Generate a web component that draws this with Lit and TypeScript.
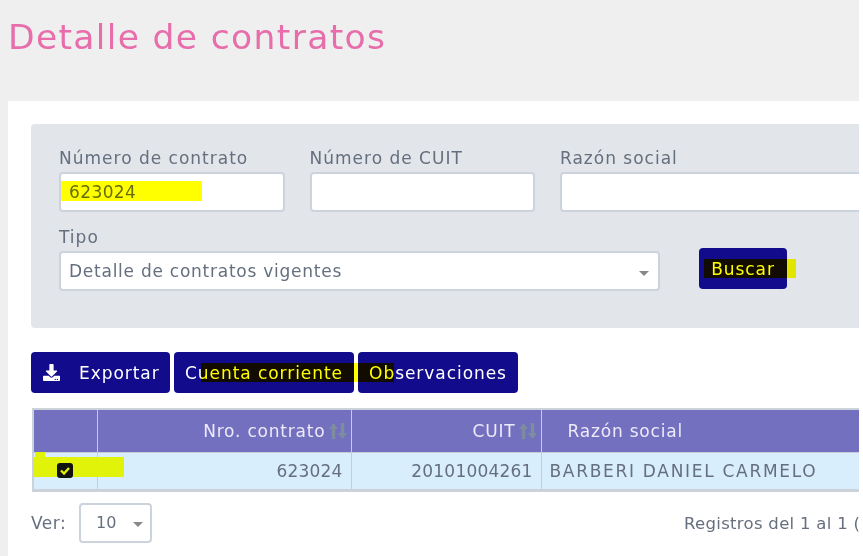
import { LitElement, css, html } from 'lit';
import { customElement } from 'lit/decorators.js';

@customElement('app-root')
export class AppRoot extends LitElement {
  static styles = css`
    :host {
      display: block;
      width: 863px;
      height: 556px;
      overflow: hidden;
      background: #fff;
      font-family: 'DejaVu Sans', sans-serif;
      font-size: 17px;
      letter-spacing: 1px;
      color: #656f7e;
    }
    .page {
      position: relative;
      width: 859px;
      height: 556px;
      overflow: hidden;
      background: #efefef;
      filter: blur(0.4px);
    }
    h1 {
      margin: 0;
      height: 101px;
      box-sizing: border-box;
      padding: 15px 0 0 8px;
      font-size: 34.5px;
      line-height: 44px;
      letter-spacing: 1.35px;
      font-weight: 400;
      color: #e76dab;
    }
    .card {
      margin-left: 8px;
      height: 455px;
      box-sizing: border-box;
      padding: 23px 0 0 23px;
      background: #fff;
      width: 900px;
    }
    .filters {
      box-sizing: border-box;
      width: 900px;
      height: 204px;
      padding: 24px 0 0 28px;
      background: #e2e5ea;
      border-radius: 4px;
    }
    .row {
      display: flex;
      gap: 25px;
    }
    .row + .row {
      margin-top: 15px;
      align-items: flex-start;
      gap: 39px;
    }
    label {
      display: block;
      line-height: 20px;
      margin-bottom: 4px;
    }
    input,
    .select {
      display: block;
      box-sizing: border-box;
      height: 40px;
      border: 2px solid #ccd3dc;
      border-radius: 4px;
      background: #fff;
      font: inherit;
      letter-spacing: 0.4px;
      color: #656f7e;
      outline: none;
    }
    input {
      width: 225.5px;
      padding: 0 8px;
    }
    .wide {
      width: 400px;
    }
    .select {
      position: relative;
      width: 601px;
      padding: 0 8px;
      line-height: 36px;
      letter-spacing: 0.75px;
    }
    .arrow {
      position: absolute;
      right: 9px;
      top: 18px;
      width: 0;
      height: 0;
      border-left: 5px solid transparent;
      border-right: 5px solid transparent;
      border-top: 5px solid #888;
    }
    button {
      box-sizing: border-box;
      height: 41px;
      border: 0;
      border-radius: 4px;
      background: #120c8c;
      color: #fff;
      font: inherit;
      letter-spacing: 0.95px;
      padding: 0;
    }
    .search {
      width: 88px;
      margin-top: 21px;
    }
    .actions {
      display: flex;
      gap: 4px;
      margin-top: 24px;
    }
    .export {
      width: 139px;
      display: flex;
      align-items: center;
      gap: 19px;
      padding-left: 12px;
    }
    .export svg {
      width: 17px;
      height: 17px;
      fill: #fff;
    }
    .account {
      width: 180px;
    }
    .notes {
      width: 160px;
    }
    table {
      margin: 15px 0 0 1px;
      border-collapse: collapse;
      table-layout: fixed;
      width: 860px;
      border: 2px solid #ccd2da;
      border-bottom-width: 3px;
    }
    th {
      height: 42px;
      padding: 0 8px;
      background: #7470c0;
      color: #eceaf8;
      font-weight: 400;
      letter-spacing: 0.8px;
      text-align: right;
      border-right: 1px solid #c9cbd6;
      border-bottom: 1px solid #c9cbd6;
      white-space: nowrap;
    }
    th svg {
      width: 18px;
      height: 16px;
      vertical-align: -2px;
      margin-left: 3px;
      margin-right: -4px;
    }
    td {
      height: 36px;
      padding: 0 8px;
      background: #d9eefc;
      text-align: right;
      letter-spacing: 0.2px;
      border-right: 1px solid #c9cbd6;
      white-space: nowrap;
    }
    td.name {
      text-align: left;
      letter-spacing: 1.7px;
    }
    th.name {
      text-align: left;
      padding-left: 26px;
    }
    .check {
      text-align: center;
      padding: 0;
    }
    .box {
      position: relative;
      z-index: 2;
      top: -2px;
      display: inline-flex;
      vertical-align: middle;
      width: 16px;
      height: 15px;
      background: #111;
      border-radius: 3px;
    }
    .box svg {
      width: 16px;
      height: 15px;
    }
    .pager {
      display: flex;
      align-items: center;
      margin-top: 11px;
      width: 828px;
    }
    .ver {
      width: 48px;
      letter-spacing: 0.5px;
    }
    .size {
      position: relative;
      box-sizing: border-box;
      width: 73px;
      height: 40px;
      padding-left: 15px;
      border: 2px solid #ccd3dc;
      border-radius: 4px;
      font-size: 16px;
      letter-spacing: 0;
      line-height: 36px;
    }
    .size .arrow {
      right: 7px;
      top: 17px;
    }
    .info {
      margin-left: auto;
      width: 175px;
      font-size: 16.5px;
      letter-spacing: 0.3px;
      white-space: nowrap;
      overflow: hidden;
    }
    .mark {
      position: absolute;
      mix-blend-mode: multiply;
      background: #e2f000;
    }
    .mark.bright {
      background: #ffff00;
    }
    .mark.flat {
      mix-blend-mode: normal;
      background: rgba(226, 242, 0, 0.96);
    }
  `;

  render() {
    return html`
      <div class="page">
        <h1>Detalle de contratos</h1>
        <div class="card">
          <div class="filters">
            <div class="row">
              <div><label>Número de contrato</label><input value="623024" /></div>
              <div><label>Número de CUIT</label><input /></div>
              <div><label>Razón social</label><input class="wide" /></div>
            </div>
            <div class="row">
              <div>
                <label>Tipo</label>
                <div class="select">Detalle de contratos vigentes<span class="arrow"></span></div>
              </div>
              <button class="search">Buscar</button>
            </div>
          </div>
          <div class="actions">
            <button class="export">
              <svg viewBox="0 0 512 512">
                <path d="M216 0h80c13.3 0 24 10.7 24 24v168h87.7c17.8 0 26.7 21.5 14.1 34.1L269.7 378.3c-7.5 7.5-19.8 7.5-27.3 0L90.1 226.1c-12.6-12.6-3.7-34.1 14.1-34.1H192V24c0-13.3 10.7-24 24-24zm296 376v112c0 13.3-10.7 24-24 24H24c-13.3 0-24-10.7-24-24V376c0-13.3 10.7-24 24-24h146.7l49 49c20.1 20.1 52.5 20.1 72.6 0l49-49H488c13.3 0 24 10.7 24 24zm-124 88c0-11-9-20-20-20s-20 9-20 20 9 20 20 20 20-9 20-20zm64 0c0-11-9-20-20-20s-20 9-20 20 9 20 20 20 20-9 20-20z"></path>
              </svg>
              Exportar
            </button>
            <button class="account">Cuenta corriente</button>
            <button class="notes">Observaciones</button>
          </div>
          <table>
            <colgroup>
              <col style="width: 64px" />
              <col style="width: 254px" />
              <col style="width: 190px" />
              <col />
            </colgroup>
            <tr>
              <th></th>
              <th>Nro. contrato${this.sortIcon()}</th>
              <th>CUIT${this.sortIcon()}</th>
              <th class="name">Razón social</th>
            </tr>
            <tr>
              <td class="check">
                <span class="box">
                  <svg viewBox="0 0 16 15">
                    <path d="M4 7.5l3 3 5-5.5" fill="none" stroke="#e4f000" stroke-width="2.4"></path>
                  </svg>
                </span>
              </td>
              <td>623024</td>
              <td>20101004261</td>
              <td class="name">BARBERI DANIEL CARMELO</td>
            </tr>
          </table>
          <div class="pager">
            <span class="ver">Ver:</span>
            <div class="size">10<span class="arrow"></span></div>
            <span class="info">Registros del 1 al 1 (</span>
          </div>
        </div>
        <div class="mark bright" style="left:61px;top:181px;width:141px;height:20px"></div>
        <div class="mark bright" style="left:704px;top:259px;width:92px;height:19px"></div>
        <div class="mark bright" style="left:201px;top:363px;width:193px;height:19px"></div>
        <div class="mark flat" style="left:34px;top:457px;width:90px;height:20px"></div>
        <div class="mark flat" style="left:35px;top:452px;width:10px;height:5px"></div>
      </div>
    `;
  }

  sortIcon() {
    return html`<svg viewBox="0 0 18 16">
      <path d="M4.5 0L9 6H6.2v10H2.8V6H0zM13.5 16L9 10h2.8V0h3.4v10H18z" fill="#7d8c9e"></path>
    </svg>`;
  }
}
